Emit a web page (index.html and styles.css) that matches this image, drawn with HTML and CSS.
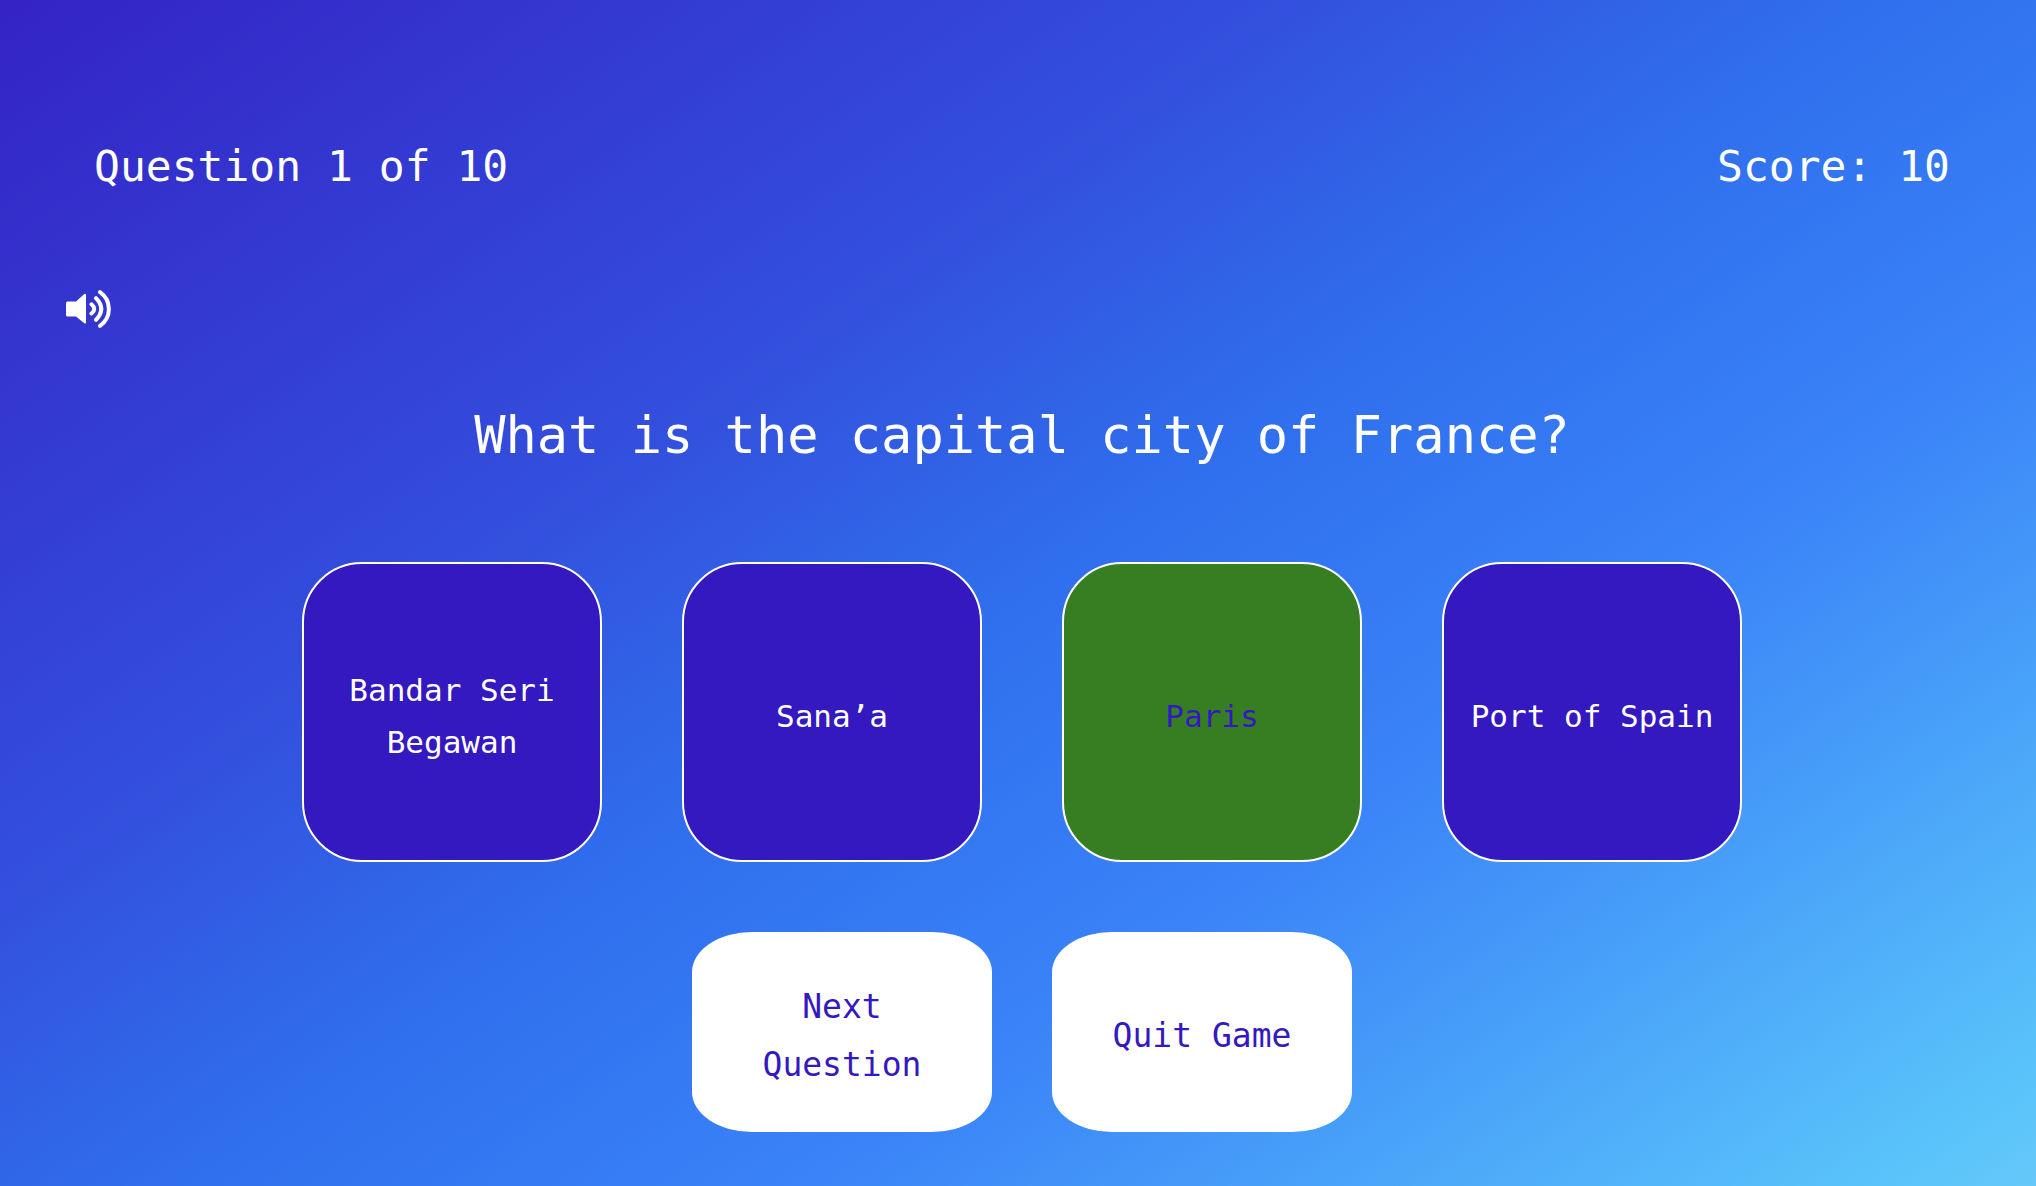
FILE: index.html
```html
<!DOCTYPE html>
<html lang="en">
<head>
<meta charset="utf-8">
<meta name="viewport" content="width=device-width, initial-scale=1">
<title>Capital Cities Quiz</title>
<link rel="stylesheet" href="styles.css">
</head>
<body>
<main class="game">
  <header class="status">
    <p class="status-text">Question 1 of 10</p>
    <p class="status-text">Score: 10</p>
  </header>
  <button class="sound" type="button" aria-label="Sound">
    <svg class="sound-icon" viewBox="0 0 45 38" aria-hidden="true">
      <path d="M1.5 11.5H10L18 4.2Q20 3 20 5V32Q20 34.500 18 33L10 26.500H1.500Q0 26.500 0 25V13Q0 11.500 1.500 11.500Z" fill="currentColor"/>
      <path d="M25.500 14.300Q31 19 25.500 23.500M30 8.200Q40.500 19 30 29.800M34 2.200C45.800 10.500 45.800 27.500 34 35.800" fill="none" stroke="currentColor" stroke-width="4" stroke-linecap="round"/>
    </svg>
  </button>
  <h1 class="question">What is the capital city of France?</h1>
  <div class="answers">
    <button class="answer" type="button">Bandar Seri Begawan</button>
    <button class="answer" type="button">Sana’a</button>
    <button class="answer answer-correct" type="button">Paris</button>
    <button class="answer" type="button">Port of Spain</button>
  </div>
  <div class="actions">
    <button class="action" type="button">Next Question</button>
    <button class="action" type="button">Quit Game</button>
  </div>
</main>
</body>
</html>
```
FILE: styles.css
```css
* {
  box-sizing: border-box;
}

body {
  margin: 0;
  min-height: 100vh;
  background: linear-gradient(145deg, #3423c5 0%, #334fdd 34%, #2f6dec 49%, #3a83f8 67%, #5ac4fa 96%, #66c8f9 100%);
  color: #fff;
  font-family: "DejaVu Sans Mono", "Liberation Mono", monospace;
}

button {
  font: inherit;
  cursor: pointer;
}

.game {
  display: flex;
  flex-direction: column;
  padding: 136px 58px 54px 66px;
}

.status {
  display: flex;
  justify-content: space-between;
  padding: 0 28px;
}

.status-text {
  margin: 0;
  font-size: 43px;
  line-height: 60px;
}

.sound {
  align-self: flex-start;
  display: flex;
  margin: 94px 0 0;
  padding: 0;
  border: 0;
  background: none;
  color: #fff;
}

.sound-icon {
  width: 45px;
  height: 38px;
}

.question {
  margin: 72px 0 92px;
  font-size: 52px;
  font-weight: 400;
  line-height: 70px;
  text-align: center;
}

.answers,
.actions {
  display: flex;
  flex-wrap: wrap;
  justify-content: center;
}

.answers {
  gap: 80px;
}

.answer {
  width: 300px;
  height: 300px;
  padding: 8px 20px 0;
  border: 2px solid #fff;
  border-radius: 20%;
  background: #3418c0;
  color: #fff;
  font-size: 31px;
  line-height: 52px;
}

.answer-correct {
  background: #377e22;
  color: #3418c0;
}

.actions {
  gap: 60px;
  margin-top: 70px;
}

.action {
  width: 300px;
  height: 200px;
  padding: 8px 40px 0;
  border: 0;
  border-radius: 20%;
  background: #fff;
  color: #3418c0;
  font-size: 33px;
  line-height: 58px;
}
```
